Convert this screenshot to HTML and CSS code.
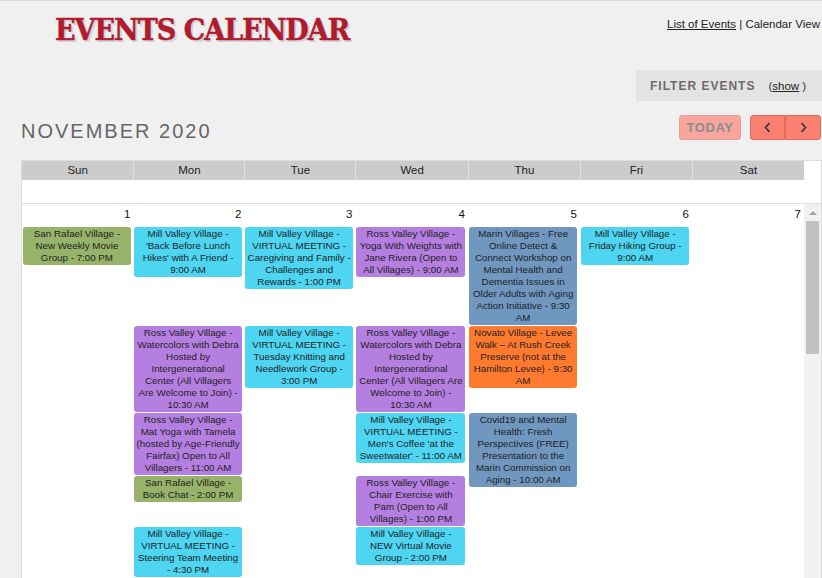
FILE: index.html
```html
<!DOCTYPE html>
<html lang="en">
<head>
<meta charset="utf-8">
<title>Events Calendar</title>
<link rel="stylesheet" href="styles.css">
</head>
<body>
<div class="page">
  <header class="page-head">
    <h1 class="title">EVENTS CALENDAR</h1>
    <nav class="view-links"><a href="#" class="link">List of Events</a> | Calendar View</nav>
  </header>

  <div class="filter-row">
    <div class="filter">
      <span class="filter-label">FILTER EVENTS</span>
      <span class="filter-toggle">(<a href="#" class="link">show</a> )</span>
    </div>
  </div>

  <div class="month-row">
    <h2 class="month">NOVEMBER 2020</h2>
    <div class="controls">
      <button class="btn today" disabled>TODAY</button>
      <div class="btn-group">
        <button class="btn nav prev" aria-label="Previous month">
          <svg width="7" height="11" viewBox="0 0 7 11"><polyline points="5.5,1 1.5,5.5 5.5,10" fill="none" stroke="#333" stroke-width="1.6"/></svg>
        </button>
        <button class="btn nav next" aria-label="Next month">
          <svg width="7" height="11" viewBox="0 0 7 11"><polyline points="1.5,1 5.5,5.5 1.5,10" fill="none" stroke="#333" stroke-width="1.6"/></svg>
        </button>
      </div>
    </div>
  </div>

  <div class="calendar">
    <div class="cal-head">
      <div class="dow-row">
        <div class="dow">Sun</div>
        <div class="dow">Mon</div>
        <div class="dow">Tue</div>
        <div class="dow">Wed</div>
        <div class="dow">Thu</div>
        <div class="dow">Fri</div>
        <div class="dow">Sat</div>
      </div>
      <div class="head-gutter"></div>
    </div>
    <div class="allday"></div>

    <div class="cal-body">
      <div class="week">
        <div class="daynum d1">1</div>
        <div class="daynum d2">2</div>
        <div class="daynum d3">3</div>
        <div class="daynum d4">4</div>
        <div class="daynum d5">5</div>
        <div class="daynum d6">6</div>
        <div class="daynum d7">7</div>

        <div class="ev green d1 l1">San Rafael Village - New Weekly Movie Group - 7:00 PM</div>
        <div class="ev cyan d2 l1">Mill Valley Village - 'Back Before Lunch Hikes' with A Friend - 9:00 AM</div>
        <div class="ev cyan d3 l1">Mill Valley Village - VIRTUAL MEETING - Caregiving and Family - Challenges and Rewards - 1:00 PM</div>
        <div class="ev purple d4 l1">Ross Valley Village - Yoga With Weights with Jane Rivera (Open to All Villages) - 9:00 AM</div>
        <div class="ev steel d5 l1">Marin Villages - Free Online Detect &amp; Connect Workshop on Mental Health and Dementia Issues in Older Adults with Aging Action Initiative - 9:30 AM</div>
        <div class="ev cyan d6 l1">Mill Valley Village - Friday Hiking Group - 9:00 AM</div>

        <div class="ev purple d2 l2">Ross Valley Village - Watercolors with Debra Hosted by Intergenerational Center (All Villagers<br>Are Welcome to Join) - 10:30 AM</div>
        <div class="ev cyan d3 l2">Mill Valley Village - VIRTUAL MEETING - Tuesday Knitting and Needlework Group - 3:00 PM</div>
        <div class="ev purple d4 l2">Ross Valley Village - Watercolors with Debra Hosted by Intergenerational Center (All Villagers Are Welcome to Join) - 10:30 AM</div>
        <div class="ev orange d5 l2">Novato Village - Levee Walk – At Rush Creek Preserve (not at the Hamilton Levee) - 9:30 AM</div>

        <div class="ev purple d2 l3">Ross Valley Village - Mat Yoga with Tamela (hosted by Age-Friendly Fairfax) Open to All Villagers - 11:00 AM</div>
        <div class="ev cyan d4 l3">Mill Valley Village - VIRTUAL MEETING - Men's Coffee 'at the Sweetwater' - 11:00 AM</div>
        <div class="ev steel d5 l3 tall">Covid19 and Mental Health: Fresh Perspectives (FREE) Presentation to the Marin Commission on Aging - 10:00 AM</div>

        <div class="ev green d2 l4">San Rafael Village - Book Chat - 2:00 PM</div>
        <div class="ev purple d4 l4">Ross Valley Village - Chair Exercise with Pam (Open to All Villages) - 1:00 PM</div>

        <div class="ev cyan d2 l5">Mill Valley Village - VIRTUAL MEETING - Steering Team Meeting - 4:30 PM</div>
        <div class="ev cyan d4 l5">Mill Valley Village - NEW Virtual Movie Group - 2:00 PM</div>
      </div>

      <div class="scrollbar">
        <div class="sb-up"><span class="sb-arrow"></span></div>
        <div class="sb-thumb"></div>
      </div>
    </div>
  </div>
</div>
</body>
</html>
```

FILE: styles.css
```css
html,
body {
  margin: 0;
  height: 100%;
  overflow: hidden;
}

body {
  background: #f0f0f0;
  border-top: 1px solid #dadada;
  font-family: "Liberation Sans", Arial, sans-serif;
  font-size: 11.5px;
  color: #222;
}

/* ---- page header ---- */
.page-head {
  display: flex;
  justify-content: space-between;
  align-items: flex-start;
  padding: 11px 2px 0 55px;
}

.title {
  margin: 0;
  font-family: "DejaVu Serif Condensed", "DejaVu Serif", serif;
  font-stretch: condensed;
  font-weight: bold;
  font-size: 30px;
  line-height: 36px;
  letter-spacing: -1px;
  color: #b01b2d;
  -webkit-text-stroke: 0.5px #b01b2d;
  text-shadow: 2px 2px 0 #cfd2dc;
}

.view-links {
  margin-top: 5px;
  line-height: 14px;
}

.link {
  color: #222;
  text-decoration: underline;
}

/* ---- filter panel ---- */
.filter-row {
  display: flex;
  justify-content: flex-end;
  margin-top: 22px;
}

.filter {
  width: 186px;
  height: 31px;
  box-sizing: border-box;
  padding-left: 14px;
  background: #e3e3e3;
  display: flex;
  align-items: center;
}

.filter-label {
  font-weight: bold;
  font-size: 12px;
  letter-spacing: 1px;
  color: #6b6b6b;
}

.filter-toggle {
  margin-left: 13px;
  color: #333;
}

/* ---- month title + navigation ---- */
.month-row {
  display: flex;
  justify-content: space-between;
  align-items: flex-start;
  margin-top: 14px;
  padding: 0 1px 0 21px;
}

.month {
  margin: 4px 0 -3px;
  font-size: 20px;
  line-height: 24px;
  font-weight: normal;
  letter-spacing: 2px;
  color: #666;
}

.controls {
  display: flex;
  gap: 9px;
}

.btn-group {
  display: flex;
}

.btn {
  height: 25px;
  box-sizing: border-box;
  margin: 0;
  padding: 0;
  border: 1px solid;
  border-radius: 3px;
  font-family: "Liberation Sans", Arial, sans-serif;
}

.today {
  width: 62px;
  background: #f7a59d;
  border-color: #f29b92;
  color: #8c8c8c;
  font-weight: bold;
  font-size: 13px;
  letter-spacing: 0.6px;
}

.nav {
  width: 35px;
  background: #fa8072;
  border-color: #e2695c;
  display: flex;
  align-items: center;
  justify-content: center;
}

.prev {
  border-radius: 3px 0 0 3px;
}

.next {
  width: 36px;
  border-radius: 0 3px 3px 0;
}

/* ---- calendar grid ---- */
.calendar {
  margin: 20px 0 0 21px;
  width: 799px;
  border: 1px solid #dddddd;
  background: #fff;
}

.cal-head {
  display: flex;
  height: 19px;
}

.dow-row,
.week {
  display: grid;
  grid-template-columns: 111.3fr 111fr 111fr 112.4fr 112fr 112fr 112fr;
  flex: 1;
}

.dow-row {
  background: #cccccc;
}

.dow {
  text-align: center;
  line-height: 19px;
  border-left: 1px solid #e2e2e2;
}

.dow:first-child {
  border-left: 0;
}

.head-gutter {
  width: 17px;
}

.allday {
  height: 23px;
  border-bottom: 1px solid #dddddd;
}

.cal-body {
  display: flex;
  height: 380px;
}

.week {
  row-gap: 1px;
  align-items: start;
  align-content: start;
}

.daynum {
  grid-row-start: 1;
  text-align: right;
  padding: 3px 3px 5px;
  line-height: 14px;
  color: #111;
}

.d1 { grid-column: 1; }
.d2 { grid-column: 2; }
.d3 { grid-column: 3; }
.d4 { grid-column: 4; }
.d5 { grid-column: 5; }
.d6 { grid-column: 6; }
.d7 { grid-column: 7; }

.l1 { grid-row-start: 2; }
.l2 { grid-row-start: 3; }
.l3 { grid-row-start: 4; }
.l4 { grid-row-start: 5; }
.l5 { grid-row-start: 6; }
.tall { grid-row-end: span 2; }

.ev {
  margin: 0 2.5px 0 1px;
  padding: 1px 2px;
  border-radius: 3px;
  font-size: 9.775px;
  line-height: 12px;
  text-align: center;
  color: #1e1e1e;
}

.green  { background: #97b36a; }
.cyan   { background: #4dd5f1; }
.purple { background: #b57fe1; }
.steel  { background: #7097c0; }
.orange { background: #ff7a2f; }

/* ---- scroll gutter ---- */
.scrollbar {
  width: 17px;
  background: #f1f1f1;
  display: flex;
  flex-direction: column;
  align-items: center;
}

.sb-up {
  width: 17px;
  height: 17px;
  display: flex;
  align-items: center;
  justify-content: center;
}

.sb-arrow {
  width: 0;
  height: 0;
  border-left: 4px solid transparent;
  border-right: 4px solid transparent;
  border-bottom: 4px solid #a3a3a3;
}

.sb-thumb {
  width: 13px;
  height: 133px;
  background: #c1c1c1;
}
```
